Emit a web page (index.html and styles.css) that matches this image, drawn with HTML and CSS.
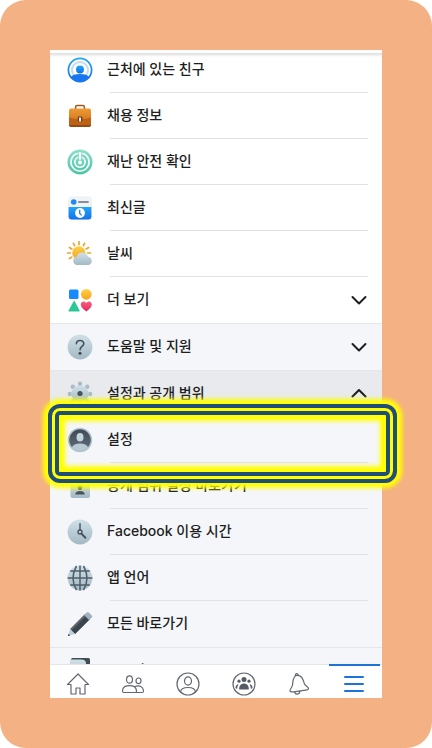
FILE: index.html
```html
<!DOCTYPE html>
<html lang="ko">
  <head>
    <meta charset="UTF-8" />
    <title>메뉴</title>
    <meta name="viewport" content="width=device-width, initial-scale=1.0" />
    <link rel="stylesheet" href="styles.css">
  </head>
  <body>
    <!-- shared gradients -->
    <svg class="defs" width="0" height="0" aria-hidden="true">
      <defs>
        <linearGradient id="steel" x1="0" y1="0" x2="0" y2="1">
          <stop offset="0" stop-color="#d0e0e7" />
          <stop offset="1" stop-color="#a3b9c4" />
        </linearGradient>
        <linearGradient id="dark" x1="0" y1="0" x2="0" y2="1">
          <stop offset="0" stop-color="#3f4853" />
          <stop offset="1" stop-color="#647181" />
        </linearGradient>
        <linearGradient id="blue" x1="0" y1="0" x2="0" y2="1">
          <stop offset="0" stop-color="#21a5f7" />
          <stop offset="1" stop-color="#1471ee" />
        </linearGradient>
        <linearGradient id="brown" x1="0" y1="0" x2="0" y2="1">
          <stop offset="0" stop-color="#ed9a35" />
          <stop offset="1" stop-color="#c96a13" />
        </linearGradient>
        <linearGradient id="green" x1="0" y1="0" x2="0" y2="1">
          <stop offset="0" stop-color="#8ae0cb" />
          <stop offset="1" stop-color="#4cc3a4" />
        </linearGradient>
        <linearGradient id="sun" x1="0" y1="0" x2="0" y2="1">
          <stop offset="0" stop-color="#fdd04b" />
          <stop offset="1" stop-color="#f6a51c" />
        </linearGradient>
        <linearGradient id="pink" x1="0" y1="0" x2="0" y2="1">
          <stop offset="0" stop-color="#fb5f7e" />
          <stop offset="1" stop-color="#dd2a5c" />
        </linearGradient>
      </defs>
    </svg>

    <div class="page">
      <div class="phone">
        <main class="menu">
          <ul class="group">
            <li>
              <a href="#" class="row">
                <svg class="icon" viewBox="0 0 26 26">
                  <circle cx="13" cy="13" r="11.6" fill="#fff" stroke="url(#blue)" stroke-width="1.7" />
                  <circle cx="13" cy="13" r="8" fill="none" stroke="#c3dcf0" stroke-width="2" />
                  <circle cx="13" cy="12.4" r="5" fill="#fff" />
                  <circle cx="13" cy="12.5" r="4" fill="url(#blue)" />
                  <path d="M3.6 20.2q2.4-3.200 9.400-3.200t9.400 3.200A12 12 0 0 1 13 25a12 12 0 0 1-9.400-4.800z" fill="#1877ee" />
                </svg>
                <span class="label">근처에 있는 친구</span>
              </a>
            </li>
            <li>
              <a href="#" class="row">
                <svg class="icon" viewBox="0 0 26 26">
                  <path d="M8.6 6.2V4q0-1.6 1.6-1.6h5.6q1.6 0 1.6 1.6v2.2" fill="none" stroke="#9b5919" stroke-width="1.5" />
                  <rect x="2" y="5.6" width="22" height="18" rx="2" fill="url(#brown)" />
                  <path d="M2 14.6q5 1.5 11 1.5t11-1.5v7q0 2-2 2H4q-2 0-2-2z" fill="#bd6214" />
                  <path d="M2 22h22q0 2-2 2H4q-2 0-2-2z" fill="#924b15" />
                  <rect x="10.8" y="13.4" width="4.6" height="5" rx="1" fill="#6b3b19" />
                  <rect x="12" y="14.5" width="2" height="4" fill="#f3f0ea" />
                </svg>
                <span class="label">채용 정보</span>
              </a>
            </li>
            <li>
              <a href="#" class="row">
                <svg class="icon" viewBox="0 0 26 26">
                  <circle cx="13" cy="13" r="12.5" fill="url(#green)" />
                  <path d="M10.2 4.5a9 9 0 1 0 5.6 0M10.8 8.4a5.2 5.2 0 1 0 4.4 0" fill="none" stroke="#fff" stroke-width="1.6" stroke-linecap="round" />
                  <path d="M11.6 3.2h2.8l-.6 8h-1.6z" fill="#fff" />
                  <circle cx="13" cy="13.4" r="2" fill="#fff" />
                </svg>
                <span class="label">재난 안전 확인</span>
              </a>
            </li>
            <li>
              <a href="#" class="row">
                <svg class="icon" viewBox="0 0 26 26">
                  <rect x="1.5" y="2" width="23" height="22.5" rx="3" fill="#f1f4f7" stroke="#e4e7ea" stroke-width=".6" />
                  <path d="M1.6 12h22.8v9.5q0 3-3 3H4.6q-3 0-3-3z" fill="url(#blue)" />
                  <circle cx="6.7" cy="7" r="2.8" fill="#2088f5" />
                  <path d="M11.7 7h9.5" stroke="#656d77" stroke-width="1.4" stroke-linecap="round" />
                  <circle cx="13" cy="18" r="4.9" fill="#fff" />
                  <path d="M12.7 14.8v3.6l2 2" fill="none" stroke="#247fe9" stroke-width="1.3" />
                </svg>
                <span class="label">최신글</span>
              </a>
            </li>
            <li>
              <a href="#" class="row">
                <svg class="icon" viewBox="0 0 26 26">
                  <path d="M12 .8v2.8M6.4 2.3l1.2 2.4M17.6 2.3l-1.2 2.4M2.4 6.6l2.4 1.4M21.6 6.6l-2.4 1.4M.6 12h2.8M20.6 12h2.8M2.4 17.6l2.4-1.4" stroke="#eaa72b" stroke-width="1.7" stroke-linecap="round" />
                  <circle cx="11.8" cy="11.8" r="6.6" fill="url(#sun)" />
                  <path d="M10.2 24a4.300 4.300 0 0 1-.5-8.500 5.900 5.900 0 0 1 11.200.2 4.200 4.200 0 0 1 .5 8.300z" fill="url(#steel)" />
                </svg>
                <span class="label">날씨</span>
              </a>
            </li>
            <li>
              <button type="button" class="row">
                <svg class="icon" viewBox="0 0 26 26">
                  <rect x="2" y="2.5" width="9.5" height="9.5" rx="1.5" fill="#168aff" />
                  <circle cx="19.3" cy="7.3" r="5.4" fill="url(#sun)" />
                  <path d="M7.2 14.3 12.3 24H1.8z" fill="#2ac796" stroke="#2ac796" stroke-linejoin="round" />
                  <path d="M19.3 24.5c-3.8-2.8-5.5-4.7-5.5-7 0-3.5 4-4.1 5.5-1.5 1.5-2.6 5.5-2 5.5 1.5 0 2.3-1.7 4.2-5.5 7z" fill="url(#pink)" />
                </svg>
                <span class="label">더 보기</span>
                <svg class="chevron" viewBox="0 0 16 10"><path d="M1.5 2 8 8.500 14.500 2" /></svg>
              </button>
            </li>
          </ul>

          <ul class="group gray">
            <li>
              <button type="button" class="row">
                <svg class="icon" viewBox="0 0 26 26">
                  <circle cx="13" cy="13" r="12.4" fill="url(#steel)" />
                  <path d="M9.4 9.8c.1-4.4 7.4-4.3 7.4-.2 0 2.9-3.7 2.9-3.7 6.1" fill="none" stroke="#46525e" stroke-width="1.6" stroke-linecap="round" />
                  <circle cx="13" cy="19.3" r="1.5" fill="#3d4854" />
                </svg>
                <span class="label">도움말 및 지원</span>
                <svg class="chevron" viewBox="0 0 16 10"><path d="M1.5 2 8 8.500 14.500 2" /></svg>
              </button>
            </li>
          </ul>

          <ul class="group gray">
            <li>
              <button type="button" class="row open" aria-expanded="true">
                <svg class="icon" viewBox="0 0 26 26">
                  <g fill="#a9bcc7">
                    <circle cx="13" cy="2.8" r="2.2" />
                    <circle cx="20.2" cy="5.8" r="2.2" />
                    <circle cx="23.2" cy="13" r="2.2" />
                    <circle cx="20.2" cy="20.2" r="2.2" />
                    <circle cx="13" cy="23.2" r="2.2" />
                    <circle cx="5.8" cy="20.2" r="2.2" />
                    <circle cx="2.8" cy="13" r="2.2" />
                    <circle cx="5.8" cy="5.8" r="2.2" />
                  </g>
                  <circle cx="13" cy="13" r="8.6" fill="url(#steel)" />
                  <circle cx="13" cy="12.5" r="2.6" fill="#46525e" />
                </svg>
                <span class="label">설정과 공개 범위</span>
                <svg class="chevron" viewBox="0 0 16 10"><path d="M1.5 7.500 8 1l6.500 6.500" /></svg>
              </button>
            </li>
            <li>
              <a href="#" class="row">
                <svg class="icon" viewBox="0 0 26 26">
                  <circle cx="13" cy="13" r="11.5" fill="url(#dark)" stroke="#b5c7d0" stroke-width="1.5" />
                  <ellipse cx="13" cy="10.3" rx="3.5" ry="4.3" fill="#c2d4dd" />
                  <path d="M4.8 20.5q2-4 8.2-4t8.200 4a11.500 11.500 0 0 1-16.400 0z" fill="#b8cbd5" />
                </svg>
                <span class="label">설정</span>
              </a>
            </li>
            <li>
              <a href="#" class="row">
                <svg class="icon" viewBox="0 0 26 26">
                  <path d="M8 9V6a5 5 0 0 1 10 0v3" fill="none" stroke="#5d6975" stroke-width="2" />
                  <rect x="3.5" y="8" width="19.5" height="17" rx="2" fill="url(#steel)" />
                  <ellipse cx="13" cy="14.500" rx="2.200" ry="2.600" fill="#46525e" />
                  <path d="M8.3 21.500q0-3.500 4.700-3.500t4.700 3.500z" fill="#46525e" />
                </svg>
                <span class="label">공개 범위 설정 바로가기</span>
              </a>
            </li>
            <li>
              <a href="#" class="row">
                <svg class="icon" viewBox="0 0 26 26">
                  <circle cx="13" cy="13" r="12.4" fill="url(#steel)" />
                  <path d="M13 4.8v6.4" stroke="#46525e" stroke-width="1.4" stroke-linecap="round" />
                  <path d="m14.4 14.6 4 4.2" stroke="#46525e" stroke-width="2" stroke-linecap="round" />
                  <circle cx="13" cy="13" r="2" fill="none" stroke="#46525e" stroke-width="1.3" />
                </svg>
                <span class="label">Facebook 이용 시간</span>
              </a>
            </li>
            <li>
              <a href="#" class="row">
                <svg class="icon" viewBox="0 0 26 26">
                  <circle cx="13" cy="13" r="12.4" fill="url(#steel)" />
                  <path d="M13 .6v24.8M.6 13h24.8M3.2 6h19.6M3.2 20h19.6M9.5 1Q2.5 13 9.5 25M16.5 1q7 12 0 24" fill="none" stroke="#515e69" stroke-width="1.5" />
                </svg>
                <span class="label">앱 언어</span>
              </a>
            </li>
            <li>
              <a href="#" class="row">
                <svg class="icon" viewBox="0 0 26 26">
                  <path d="m3 18 15-15 5 5L8 23z" fill="#5a646e" />
                  <path d="m4.5 19.5 15-15 3.500 3.500L8 23z" fill="#3b444d" />
                  <path d="m17 4 2.8-2.6q1-1 2 0l3 3q1 1 0 2L22 9z" fill="#9fb3bf" />
                  <path d="M3 18 1 25l7-2z" fill="#bfd0d9" />
                  <path d="M1.600 22.800 1 25l2.200-.6z" fill="#353e47" />
                </svg>
                <span class="label">모든 바로가기</span>
              </a>
            </li>
          </ul>

          <ul class="group gray">
            <li>
              <a href="#" class="row">
                <svg class="icon" viewBox="0 0 26 26">
                  <rect x="4" y="0" width="19" height="25" rx="1.5" fill="#414b55" />
                  <path d="M3 1.500h11q5 0 5 4V22L3 25z" fill="url(#steel)" />
                </svg>
                <span class="label">로그아웃</span>
              </a>
            </li>
          </ul>
        </main>

        <nav class="tabs">
          <a href="#" class="tab" aria-label="홈">
            <svg viewBox="0 0 24 24"><path d="M1.500 12.500 12 2l10.500 10.500H19V22h-5v-6h-4v6H5v-9.500z" /></svg>
          </a>
          <a href="#" class="tab" aria-label="친구">
            <svg viewBox="0 0 24 24">
              <ellipse cx="8.5" cy="7.5" rx="3" ry="3.700" />
              <ellipse cx="17.5" cy="8.800" rx="2.500" ry="2.800" />
              <path d="M3 20.500q-1.700 0-1.500-2c.8-6.500 13.200-6.500 14 0q.2 2-1.500 2zM14 14.500c4.500-1.500 8 .3 8.500 4q.2 2-1.500 2h-7" />
            </svg>
          </a>
          <a href="#" class="tab" aria-label="프로필">
            <svg viewBox="0 0 24 24">
              <circle cx="12" cy="12" r="11" />
              <ellipse cx="12" cy="9" rx="3.5" ry="4.200" />
              <path d="M4.500 20c.5-6 14.500-6 15 0" />
            </svg>
          </a>
          <a href="#" class="tab" aria-label="그룹">
            <svg viewBox="0 0 24 24">
              <circle cx="12" cy="12" r="11" />
              <g class="solid">
                <circle cx="12" cy="7.5" r="2.5" />
                <circle cx="7" cy="9.2" r="1.600" />
                <circle cx="17" cy="9.2" r="1.600" />
                <path d="M7.200 17.500c-.8-8 10.400-8 9.600 0zM3.500 16.200q0-3.700 3-4-1.500 2.500-1.200 4.600zM20.500 16.200q0-3.700-3-4 1.500 2.500 1.200 4.600z" />
              </g>
            </svg>
          </a>
          <a href="#" class="tab" aria-label="알림">
            <svg viewBox="0 0 24 24">
              <path d="M9.500 3.500c-4 1.500-3.500 5.500-4 9.500-.3 2.500-3 4.500-2.500 6 .3 1.200 2 1 3.500.8l12-1.700c1.500-.2 3-.5 3-1.700 0-1.500-3-2.200-4-4.500-1.500-3.700-2-9-8-8.400zM8.300 3.700c-.4-2.500 3-2.700 3.100-.3M7.500 20c1 3.200 5 2.700 5.500-.8" />
            </svg>
          </a>
          <a href="#" class="tab active" aria-label="메뉴" aria-current="page">
            <svg viewBox="0 0 24 24"><path d="M3 5h18M3 12h18M3 19h18" /></svg>
          </a>
        </nav>

        <div class="highlight"></div>
      </div>
    </div>
  </body>
</html>
```
FILE: styles.css
```css
* {
  box-sizing: border-box;
}
body {
  margin: 0;
  background: white;
  color: #1c1e21;
  font-family: Inter, "Noto Sans CJK KR", sans-serif;
}
.defs {
  position: absolute;
}
.page {
  background: #f4b183;
  border-radius: 26px;
  padding: 50px;
}
.phone {
  position: relative;
  background: white;
}

/* menu list */
.menu {
  height: calc(100vh - 134px);
  overflow: hidden;
  border-top: 3px solid white;
  box-shadow: inset 0 3px 3px -1px #ddd;
}
.group {
  list-style: none;
  margin: 0;
  padding: 0;
}
.group:first-child {
  margin-top: -6px;
}
.group.gray {
  background: #f5f6f9;
  border-top: 1px solid #e4e6ea;
}
.group li:not(:last-child)::after {
  content: "";
  display: block;
  height: 1px;
  margin: -1px 14px 0 60px;
  background: #e0e2e6;
}
.group .row.open + ::after {
  background: none;
}
.row {
  display: flex;
  align-items: center;
  gap: 14px;
  width: 100%;
  height: 46px;
  padding: 0 15px 0 17px;
  border: 0;
  background: none;
  color: inherit;
  font: inherit;
  font-size: 14px;
  font-weight: 500;
  line-height: 20px;
  text-align: left;
  text-decoration: none;
  cursor: pointer;
}
.row.open {
  background: #e8eaee;
}
.icon {
  flex: none;
  width: 26px;
  height: 26px;
}
.label {
  flex: 1;
  padding-bottom: 2px;
  white-space: nowrap;
}
.chevron {
  width: 16px;
  height: 10px;
  fill: none;
  stroke: #1c1e21;
  stroke-width: 2;
  stroke-linecap: round;
  stroke-linejoin: round;
}

/* bottom tabs */
.tabs {
  display: flex;
  height: 34px;
  background: white;
  box-shadow: inset 0 1px #e4e6ea;
}
.tab {
  flex: 1;
  display: flex;
  justify-content: center;
  padding-top: 8px;
}
.tab svg {
  width: 24px;
  height: 24px;
  fill: none;
  stroke: #626771;
  stroke-width: 1.2;
  stroke-linejoin: round;
  stroke-linecap: round;
}
.tab .solid {
  fill: #545a66;
  stroke: none;
}
.tab.active {
  background: linear-gradient(#1b74d8, #1b74d8) center top / calc(100% - 4px) 2px no-repeat;
}
.tab.active svg {
  stroke: #1b74d8;
  stroke-width: 2;
}

/* double frame around the settings row */
.highlight {
  position: absolute;
  top: 354px;
  left: -2px;
  right: -15px;
  height: 79px;
  border: 4px solid #1f4e79;
  border-radius: 12px;
  box-shadow:
    0 0 4px 5px yellow,
    inset 0 0 0 3px yellow,
    inset 0 0 0 7px #1f4e79,
    inset 0 0 4px 13px yellow;
  pointer-events: none;
}
```
